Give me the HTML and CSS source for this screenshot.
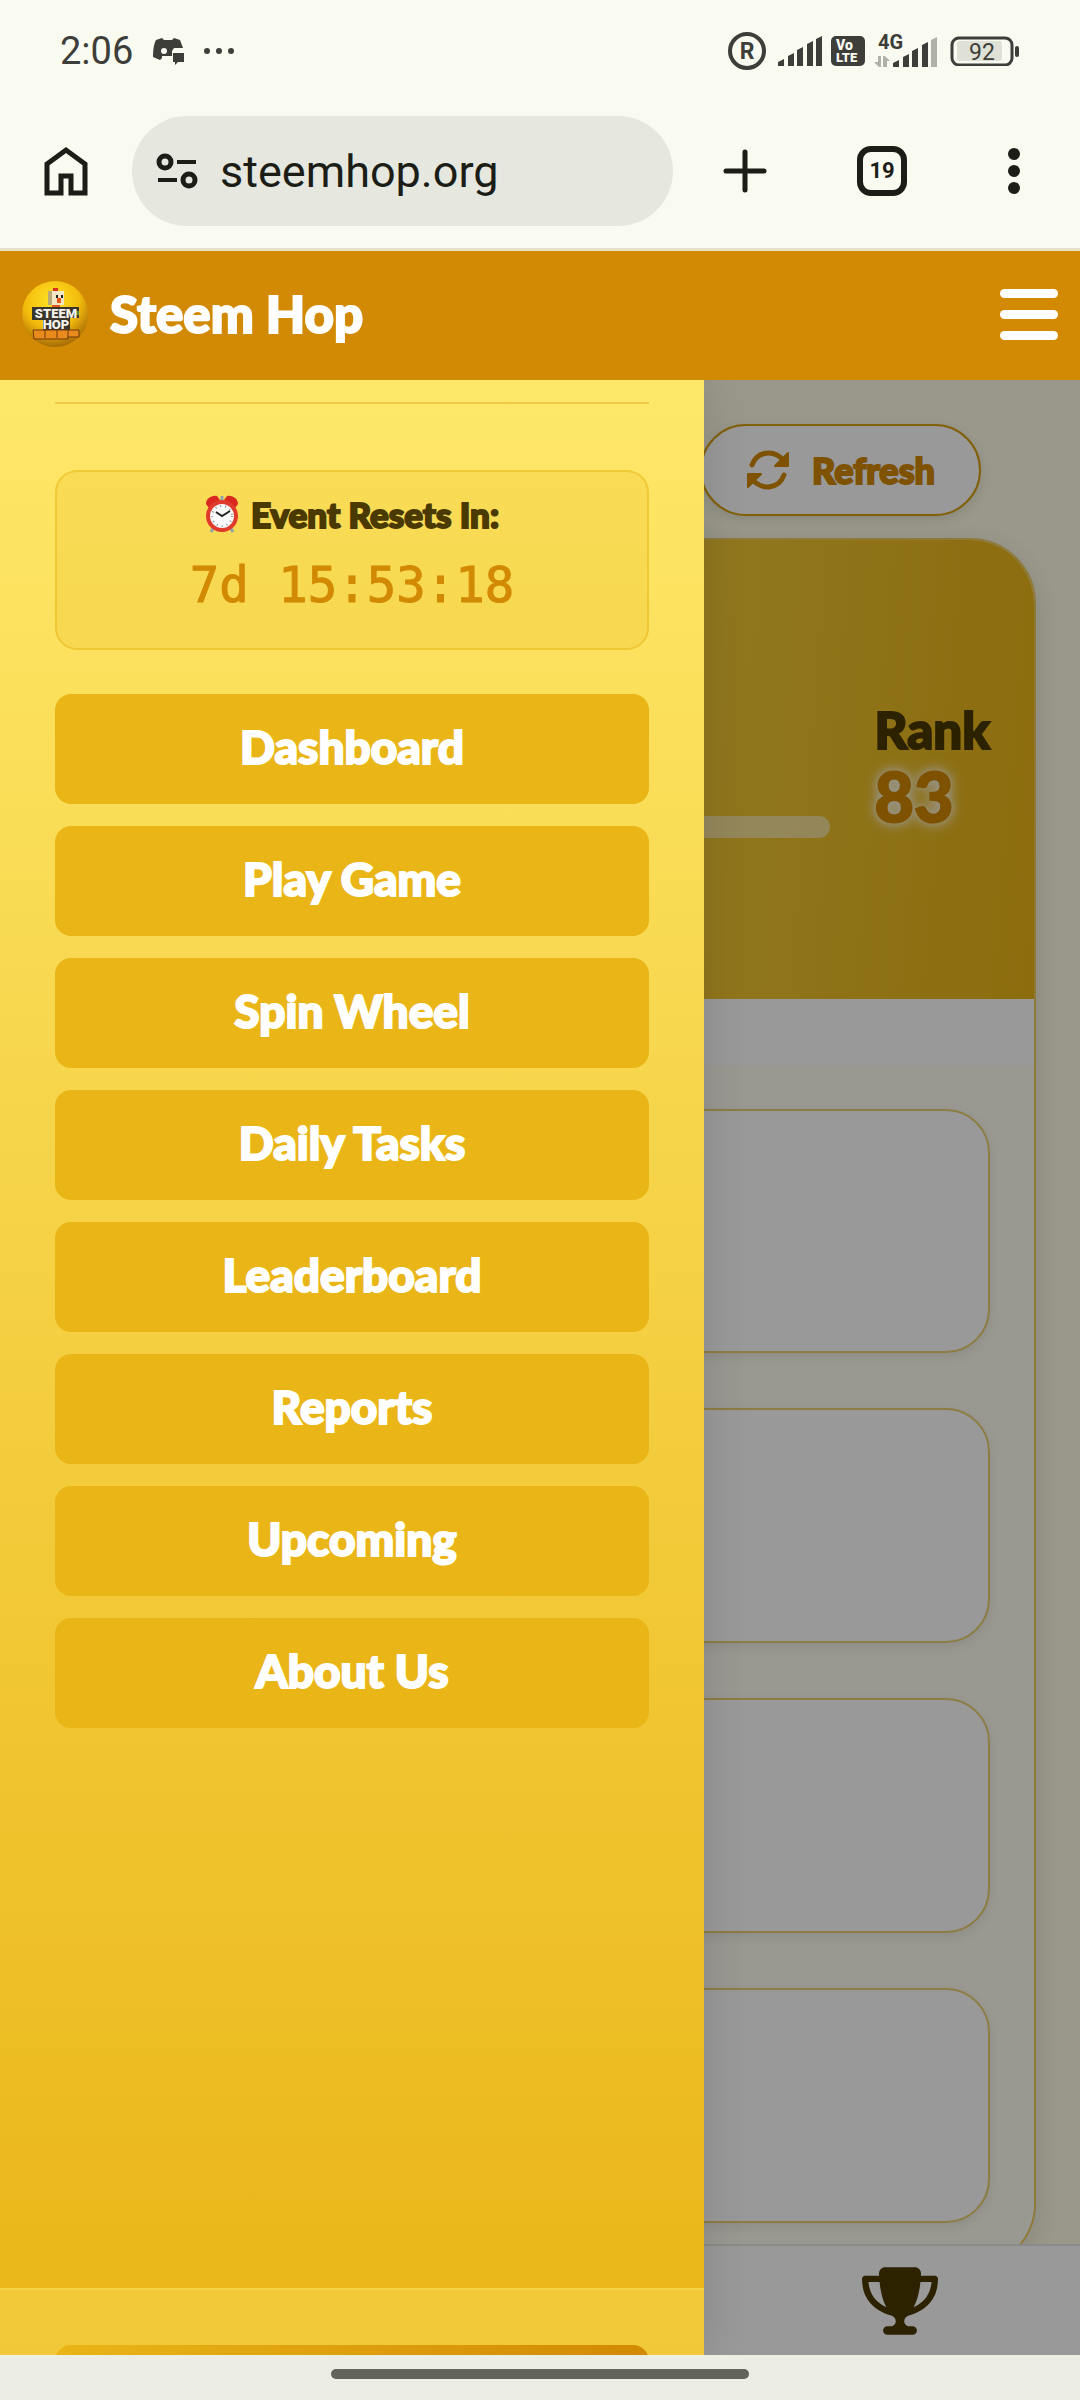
FILE: index.html
```html
<!DOCTYPE html>
<html lang="en">
<head>
    <meta charset="utf-8">
    <title>Steem Hop</title>
    <link rel="stylesheet" href="styles.css">
</head>
<body>
    <div class="status-bar">
        <span class="clock">2:06</span>
        <svg class="discord" width="32" height="28" viewBox="0 0 32 28">
            <path fill="#3d3e3a" fill-rule="evenodd" d="M9 1l2 2h8l2-2 6 2 3 8H21l-2 3v5l-10 0 0 2-2 2-7-3C0 12 1 7 3 3zM11 11a3 3 0 1 0 0 6 3 3 0 0 0 0-6z"/>
            <path fill="#3d3e3a" d="M20 16h11v9h-6l-3 3v-3h-2z"/>
        </svg>
        <svg class="more-dots" width="32" height="8" viewBox="0 0 32 8">
            <g fill="#3d3e3a"><circle cx="4" cy="4" r="3"/><circle cx="16" cy="4" r="3"/><circle cx="28" cy="4" r="3"/></g>
        </svg>
        <div class="status-right">
            <svg width="38" height="38" viewBox="0 0 38 38">
                <circle cx="19" cy="19" r="17" fill="none" stroke="#3d3e3a" stroke-width="4"/>
                <text x="19" y="27" text-anchor="middle" font-family="Roboto" font-weight="700" font-size="23" fill="#3d3e3a">R</text>
            </svg>
            <svg width="44" height="30" viewBox="0 0 44 30">
                <path fill="#3d3e3a" d="M0 30v-4l6-3v7zM10 30V20l6-3v13zM19 30V14l6-3v19zM29 30V8l6-3v25zM38 30V3l6-3v30z"/>
            </svg>
            <svg class="volte" width="34" height="30" viewBox="0 0 34 30">
                <rect width="34" height="30" rx="5" fill="#3d3e3a"/>
                <g font-family="Roboto" font-weight="900" fill="#f9faf0"><text x="5" y="14" font-size="14">Vo</text><text x="5" y="26" font-size="13">LTE</text></g>
            </svg>
            <svg class="signal-4g" width="64" height="48" viewBox="0 -8 64 48">
                <text x="4" y="14" font-family="Roboto" font-weight="700" font-size="20" fill="#3d3e3a">4G</text>
                <path fill="#b0b1a8" d="M4 21h3v11H5l-5-5h4zM9 32V21h2l5 5h-3v6zM57 32V5l6-3v30z"/>
                <path fill="#3d3e3a" d="M19 32v-4l6-3v7zM29 32V22l6-3v13zM38 32V16l6-3v19zM48 32V10l6-3v25z"/>
            </svg>
            <svg width="70" height="30" viewBox="0 0 70 30">
                <rect x="2" y="2" width="60" height="27" rx="7" fill="none" stroke="#3d3e3a" stroke-width="3"/>
                <rect x="7" y="5" width="45" height="20" rx="3" fill="#dfe0d6"/>
                <rect x="65" y="10" width="4" height="11" rx="2" fill="#3d3e3a"/>
                <text x="32" y="24" text-anchor="middle" font-family="Roboto" font-size="23" fill="#3d3e3a">92</text>
            </svg>
        </div>
    </div>

    <div class="browser-bar">
        <button class="icon-btn" aria-label="Home">
            <svg width="44" height="50" viewBox="0 0 44 50">
                <path fill="none" stroke="#1b1d16" stroke-width="5" d="M3 47V18L22 4l19 14v29H27V30H17v17z"/>
            </svg>
        </button>
        <div class="address">
            <svg width="42" height="36" viewBox="0 0 42 36">
                <g fill="none" stroke="#1b1d16"><circle cx="9" cy="9" r="6" stroke-width="5"/><circle cx="33" cy="27" r="6" stroke-width="5"/><path stroke-width="4" d="M21 9h19M2 27h19"/></g>
            </svg>
            <input class="url" type="text" value="steemhop.org" aria-label="Address">
        </div>
        <button class="icon-btn plus" aria-label="New tab">
            <svg width="44" height="44" viewBox="0 0 44 44">
                <path stroke="#1b1d16" stroke-width="5" stroke-linecap="round" d="M3 22h38M22 3v38"/>
            </svg>
        </button>
        <button class="tabs">19</button>
        <button class="icon-btn kebab" aria-label="More">
            <svg width="12" height="46" viewBox="0 0 12 46">
                <g fill="#1b1d16"><circle cx="6" cy="6" r="6"/><circle cx="6" cy="23" r="6"/><circle cx="6" cy="40" r="6"/></g>
            </svg>
        </button>
    </div>

    <header class="site-header">
        <svg class="logo" width="66" height="66" viewBox="0 0 66 66">
            <defs>
                <radialGradient id="ball" cx="45%" cy="30%" r="70%">
                    <stop offset="0" stop-color="#ffe326"/>
                    <stop offset=".6" stop-color="#f3bb0c"/>
                    <stop offset="1" stop-color="#a86c06"/>
                </radialGradient>
            </defs>
            <circle cx="33" cy="33" r="33" fill="url(#ball)"/>
            <path fill="#d5301b" d="M31 7h5v4h-5z"/>
            <path fill="#f3e6c2" d="M26 10h16v14H26z"/>
            <path fill="#b9a878" d="M26 10h4v14h-4z"/>
            <path fill="#222" d="M34 14h2v3h-2zM39 14h2v3h-2z"/>
            <path fill="#e5541b" d="M35 17h4v5h-4zM30 24h8v3h-8z"/>
            <path fill="#39342c" d="M10 26h47v11H48v14H21V39H10z"/>
            <path fill="#4f8c34" d="M54 30h3v4h-3z"/>
            <path fill="#e98a1c" stroke="#713b08" d="M11 49h46v7H46v2H12z"/>
            <path stroke="#713b08" d="M23 49v8M35 49v8M46 49v8"/>
            <g font-family="Roboto" font-weight="900" fill="#f4f2ea" text-anchor="middle">
                <text x="34" y="37" font-size="13">STEEM</text>
                <text x="34" y="48" font-size="13">HOP</text>
            </g>
        </svg>
        <h1>Steem Hop</h1>
        <button class="hamburger" aria-label="Menu"><span></span><span></span><span></span></button>
    </header>

    <div class="viewport">
        <main class="page">
            <div class="page-tools">
                <button class="refresh">
                    <svg width="44" height="40" viewBox="0 0 44 40">
                        <g fill="none" stroke="#d28903" stroke-width="5" stroke-linecap="round"><path d="M6 15C11 1 28 -1 38 11"/><path d="M38 25C33 39 16 41 6 29"/></g>
                        <path fill="#d28903" stroke="#d28903" stroke-width="2" stroke-linejoin="round" d="M42 3v13H29zM2 37V24h13z"/>
                    </svg>
                    Refresh
                </button>
            </div>
            <section class="board">
                <div class="board-head">
                    <div class="progress-wrap"><div class="progress"></div></div>
                    <div class="rank">
                        <div class="rank-label">Rank</div>
                        <div class="rank-value">83</div>
                    </div>
                </div>
                <div class="board-list">
                    <div class="entry entry-first"></div>
                    <div class="entry"></div>
                    <div class="entry"></div>
                    <div class="entry"></div>
                </div>
            </section>
        </main>
        <nav class="bottom-nav">
            <a href="#leaderboard" aria-label="Leaderboard">
                <svg width="76" height="68" viewBox="0 0 576 512">
                    <path fill="#4a3900" d="M400 0H176c-26.500 0-48.100 21.800-47.100 48.200c.2 5.300 .4 10.600 .7 15.800H24C10.700 64 0 74.700 0 88c0 92.600 33.500 157 78.500 200.700c44.300 43.100 98.300 64.800 138.100 75.800c23.400 6.500 39.400 26 39.400 45.600c0 20.900-17 37.900-37.900 37.900H192c-17.700 0-32 14.300-32 32s14.300 32 32 32H384c17.700 0 32-14.300 32-32s-14.300-32-32-32H357.900C337 448 320 431 320 410.100c0-19.600 15.900-39.200 39.400-45.600c39.900-11 93.900-32.700 138.200-75.800C542.500 245 576 180.600 576 88c0-13.300-10.700-24-24-24H446.400c.3-5.200 .5-10.400 .7-15.800C448.100 21.800 426.500 0 400 0zM48.900 112h84.400c9.100 90.100 29.200 150.300 51.900 190.600c-24.900-11-50.800-26.500-73.200-48.300c-32-31.100-58-76-63-142.300zM464.100 254.300c-22.400 21.800-48.300 37.300-73.200 48.300c22.700-40.300 42.800-100.500 51.900-190.600h84.400c-5.100 66.300-31.100 111.200-63 142.300z"/>
                </svg>
            </a>
        </nav>
        <div class="overlay"></div>

        <aside class="drawer">
            <div class="drawer-body">
                <hr>
                <div class="timer">
                    <div class="timer-title">
                        <svg width="34" height="38" viewBox="0 0 34 38">
                            <path stroke="#8fa3a8" stroke-width="3" d="M9 32l-3 5M25 32l3 5M17 1v5"/>
                            <path fill="#d9281f" d="M1 9c0-5 5-9 11-8l3 4-11 8zM33 9c0-5-5-9-11-8l-3 4 11 8z"/>
                            <circle cx="17" cy="21" r="14" fill="#fafafa" stroke="#e03a2c" stroke-width="4"/>
                            <circle cx="17" cy="21" r="10" fill="none" stroke="#8a9296" stroke-width="2" stroke-dasharray="1 4"/>
                            <path fill="none" stroke="#222" stroke-width="2" d="M11 17l6 4 8-5"/>
                        </svg>
                        Event Resets In:
                    </div>
                    <div class="timer-value">7d 15:53:18</div>
                </div>
                <nav class="menu">
                    <a href="#dashboard">Dashboard</a>
                    <a href="#play">Play Game</a>
                    <a href="#spin">Spin Wheel</a>
                    <a href="#tasks">Daily Tasks</a>
                    <a href="#leaderboard">Leaderboard</a>
                    <a href="#reports">Reports</a>
                    <a href="#upcoming">Upcoming</a>
                    <a href="#about">About Us</a>
                </nav>
            </div>
            <div class="drawer-footer">
                <button class="footer-btn" aria-label="Account"></button>
            </div>
        </aside>
    </div>

    <div class="gesture-bar"><span></span></div>
</body>
</html>
```
FILE: styles.css
```css
* {
    box-sizing: border-box;
}
body {
    margin: 0;
    height: 100vh;
    display: flex;
    flex-direction: column;
    background-color: #f9faf0;
    font-family: Lato, "Liberation Sans", sans-serif;
    font-weight: 900;
    color: #4a3900;
}
button {
    border: none;
    padding: 0;
    background: none;
    font: inherit;
    cursor: pointer;
}
a {
    text-decoration: none;
}
svg {
    display: block;
    flex-shrink: 0;
}

/* phone status bar */
.status-bar {
    display: flex;
    align-items: center;
    height: 102px;
    padding: 0 60px;
    color: #3d3e3a;
    font-family: Roboto, sans-serif;
    font-weight: 400;
}
.clock {
    font-size: 38px;
}
.discord {
    margin-left: 20px;
}
.more-dots {
    margin-left: 18px;
}
.status-right {
    display: flex;
    align-items: center;
    gap: 12px;
    margin-left: auto;
}
.volte {
    margin-left: -3px;
}
.signal-4g {
    margin-left: -3px;
}

/* browser bar */
.browser-bar {
    display: flex;
    align-items: center;
    height: 149px;
    padding: 0 60px 8px 44px;
    border-bottom: 3px solid #e6e0c8;
}
.address {
    display: flex;
    align-items: center;
    flex: 1;
    gap: 22px;
    min-width: 0;
    height: 110px;
    margin-left: 44px;
    padding: 0 24px;
    border-radius: 55px;
    background-color: #e6e8df;
}
.url {
    flex: 1;
    min-width: 0;
    border: none;
    padding: 0;
    background: none;
    font-family: Roboto, sans-serif;
    font-size: 45px;
    color: #1b1d16;
}
.plus {
    margin-left: 50px;
}
.tabs {
    flex-shrink: 0;
    width: 50px;
    height: 50px;
    margin-left: 90px;
    border: 6px solid #1b1d16;
    border-radius: 14px;
    font-family: Roboto, sans-serif;
    font-weight: 700;
    font-size: 22px;
    line-height: 38px;
    color: #1b1d16;
}
.kebab {
    margin-left: 101px;
}

/* site header */
.site-header {
    display: flex;
    align-items: center;
    height: 129px;
    padding: 0 22px 3px;
    background-color: #d28903;
}
.site-header h1 {
    margin: 0 0 2px 22px;
    font-size: 51px;
    font-weight: 900;
    -webkit-text-stroke: 2px;
    color: #fff;
}
.hamburger {
    display: flex;
    flex-direction: column;
    gap: 12px;
    width: 58px;
    margin-left: auto;
}
.hamburger span {
    height: 9px;
    border-radius: 5px;
    background-color: #fff;
}

/* page under the drawer */
.viewport {
    position: relative;
    display: flex;
    flex-direction: column;
    flex: 1;
    min-height: 0;
    overflow: hidden;
    background-color: #fffde7;
}
.page {
    flex: 1;
    min-height: 0;
    overflow: hidden;
    padding: 44px;
}
.page-tools {
    display: flex;
    justify-content: flex-end;
    padding-right: 55px;
    margin-bottom: 22px;
}
.refresh {
    display: flex;
    align-items: center;
    gap: 22px;
    height: 92px;
    padding: 0 44px;
    border: 2px solid #d8a010;
    border-radius: 46px;
    background-color: #fff;
    box-shadow: 0 4px 12px rgba(0, 0, 0, 0.1);
    font-size: 36px;
    -webkit-text-stroke: 2px;
    color: #d28903;
}
.board {
    overflow: hidden;
    border: 2px solid #eeca60;
    border-radius: 66px;
    background-color: #fff;
    box-shadow: 0 8px 24px rgba(0, 0, 0, 0.12);
}
.board-head {
    display: flex;
    align-items: center;
    gap: 44px;
    height: 459px;
    padding: 0 44px;
    background: linear-gradient(95deg, #fde768, #eab517);
}
.progress-wrap {
    display: flex;
    align-items: flex-end;
    flex: 1;
    height: 136px;
}
.progress {
    flex: 1;
    height: 22px;
    border-radius: 11px;
    background-color: rgba(255, 255, 255, 0.5);
}
.rank {
    -webkit-text-stroke: 2px;
}
.rank-label {
    font-size: 51px;
    line-height: 60px;
}
.rank-value {
    font-size: 68px;
    line-height: 72px;
    padding-bottom: 8px;
    color: #d28903;
    text-shadow: 0 0 10px #fff, 0 0 16px #fff;
}
.board-list {
    display: flex;
    flex-direction: column;
    gap: 55px;
    margin-top: 66px;
    padding: 44px;
    background-color: #fffef2;
}
.entry {
    height: 235px;
    border: 2px solid #eccf70;
    border-radius: 44px;
    background-color: #fff;
    box-shadow: 0 4px 12px rgba(0, 0, 0, 0.08);
}
.entry-first {
    height: 244px;
}
.bottom-nav {
    display: grid;
    grid-template-columns: repeat(3, 1fr);
    align-items: center;
    height: 111px;
    border-top: 2px solid #e6e6e6;
    background-color: #fff;
}
.bottom-nav a {
    grid-column: 3;
    justify-self: center;
}
.overlay {
    position: absolute;
    inset: 0;
    background-color: rgba(0, 0, 0, 0.4);
}

/* slide-out menu */
.drawer {
    position: absolute;
    top: 0;
    bottom: 0;
    left: 0;
    display: flex;
    flex-direction: column;
    width: 704px;
    max-width: 100%;
    overflow: hidden;
    background: linear-gradient(180deg, #fee869, #eab517);
    box-shadow: 0 0 44px rgba(0, 0, 0, 0.12);
}
.drawer-body {
    flex: 1;
    min-height: 0;
    padding: 22px 55px;
}
.drawer hr {
    height: 2px;
    margin: 0 0 66px;
    border: none;
    background-color: #f2ca48;
}
.timer {
    height: 180px;
    margin-bottom: 44px;
    padding-top: 20px;
    border: 2px solid rgba(234, 181, 23, 0.5);
    border-radius: 22px;
    background-color: rgba(234, 181, 23, 0.2);
    text-align: center;
}
.timer-title {
    display: flex;
    align-items: center;
    justify-content: center;
    gap: 12px;
    height: 44px;
    font-size: 35px;
    -webkit-text-stroke: 2px;
}
.timer-value {
    margin-top: 20px;
    font-family: "DejaVu Sans Mono", monospace;
    font-size: 49px;
    font-weight: 400;
    line-height: 60px;
    -webkit-text-stroke: 1px;
    color: #d28903;
}
.menu {
    display: flex;
    flex-direction: column;
    gap: 22px;
}
.menu a {
    height: 110px;
    border-radius: 16px;
    background-color: #eab517;
    font-size: 46px;
    line-height: 106px;
    -webkit-text-stroke: 2px;
    text-align: center;
    color: #fff;
}
.drawer-footer {
    height: 67px;
    overflow: hidden;
    padding: 55px 55px 0;
    border-top: 2px solid rgba(253, 231, 104, 0.3);
    background-color: rgba(253, 231, 104, 0.4);
}
.footer-btn {
    display: block;
    width: 100%;
    height: 110px;
    border-radius: 16px;
    background: linear-gradient(90deg, #eab517, #d28903);
}

.gesture-bar {
    display: flex;
    justify-content: center;
    height: 45px;
    padding-top: 14px;
    background-color: #edeee3;
}
.gesture-bar span {
    width: 418px;
    height: 10px;
    border-radius: 5px;
    background-color: #62645c;
}
```
